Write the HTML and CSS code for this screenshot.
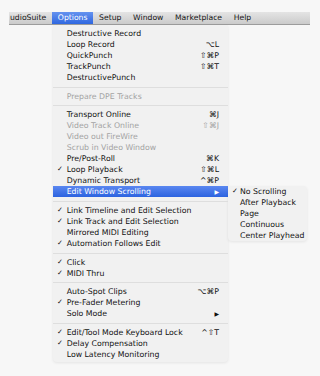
FILE: index.html
```html
<!DOCTYPE html>
<html>
<head>
<meta charset="utf-8">
<link rel="stylesheet" href="styles.css">
</head>
<body>
<div class="menubar">
  <span class="mb-item first">udioSuite</span>
  <span class="mb-item active">Options</span>
  <span class="mb-item">Setup</span>
  <span class="mb-item">Window</span>
  <span class="mb-item">Marketplace</span>
  <span class="mb-item">Help</span>
</div>
<div class="menu">
  <div class="row"><span class="chk"></span><span class="lbl">Destructive Record</span><span class="sc"></span></div>
  <div class="row"><span class="chk"></span><span class="lbl">Loop Record</span><span class="sc">⌥L</span></div>
  <div class="row"><span class="chk"></span><span class="lbl">QuickPunch</span><span class="sc">⇧⌘P</span></div>
  <div class="row"><span class="chk"></span><span class="lbl">TrackPunch</span><span class="sc">⇧⌘T</span></div>
  <div class="row"><span class="chk"></span><span class="lbl">DestructivePunch</span><span class="sc"></span></div>
  <div class="sep"></div>
  <div class="row off"><span class="chk"></span><span class="lbl">Prepare DPE Tracks</span><span class="sc"></span></div>
  <div class="sep"></div>
  <div class="row"><span class="chk"></span><span class="lbl">Transport Online</span><span class="sc">⌘J</span></div>
  <div class="row off"><span class="chk"></span><span class="lbl">Video Track Online</span><span class="sc">⇧⌘J</span></div>
  <div class="row off"><span class="chk"></span><span class="lbl">Video out FireWire</span><span class="sc"></span></div>
  <div class="row off"><span class="chk"></span><span class="lbl">Scrub in Video Window</span><span class="sc"></span></div>
  <div class="row"><span class="chk"></span><span class="lbl">Pre/Post-Roll</span><span class="sc">⌘K</span></div>
  <div class="row"><span class="chk">✓</span><span class="lbl">Loop Playback</span><span class="sc">⇧⌘L</span></div>
  <div class="row"><span class="chk"></span><span class="lbl">Dynamic Transport</span><span class="sc">^⌘P</span></div>
  <div class="row hl"><span class="chk"></span><span class="lbl">Edit Window Scrolling</span><span class="sc arrow">▶</span>
    <div class="submenu">
      <div class="row"><span class="chk">✓</span><span class="lbl">No Scrolling</span></div>
      <div class="row"><span class="chk"></span><span class="lbl">After Playback</span></div>
      <div class="row"><span class="chk"></span><span class="lbl">Page</span></div>
      <div class="row"><span class="chk"></span><span class="lbl">Continuous</span></div>
      <div class="row"><span class="chk"></span><span class="lbl">Center Playhead</span></div>
    </div>
  </div>
  <div class="sep"></div>
  <div class="row"><span class="chk">✓</span><span class="lbl">Link Timeline and Edit Selection</span><span class="sc"></span></div>
  <div class="row"><span class="chk">✓</span><span class="lbl">Link Track and Edit Selection</span><span class="sc"></span></div>
  <div class="row"><span class="chk"></span><span class="lbl">Mirrored MIDI Editing</span><span class="sc"></span></div>
  <div class="row"><span class="chk">✓</span><span class="lbl">Automation Follows Edit</span><span class="sc"></span></div>
  <div class="sep"></div>
  <div class="row"><span class="chk">✓</span><span class="lbl">Click</span><span class="sc"></span></div>
  <div class="row"><span class="chk">✓</span><span class="lbl">MIDI Thru</span><span class="sc"></span></div>
  <div class="sep"></div>
  <div class="row"><span class="chk"></span><span class="lbl">Auto-Spot Clips</span><span class="sc">⌥⌘P</span></div>
  <div class="row"><span class="chk">✓</span><span class="lbl">Pre-Fader Metering</span><span class="sc"></span></div>
  <div class="row"><span class="chk"></span><span class="lbl">Solo Mode</span><span class="sc arrow">▶</span></div>
  <div class="sep"></div>
  <div class="row"><span class="chk">✓</span><span class="lbl">Edit/Tool Mode Keyboard Lock</span><span class="sc">^⇧T</span></div>
  <div class="row"><span class="chk">✓</span><span class="lbl">Delay Compensation</span><span class="sc"></span></div>
  <div class="row"><span class="chk"></span><span class="lbl">Low Latency Monitoring</span><span class="sc"></span></div>
</div>
</body>
</html>
```

FILE: styles.css
```css
html, body {
  margin: 0;
  padding: 0;
}
body {
  background: #f7f7f7;
  font-family: "DejaVu Sans", "Liberation Sans", sans-serif;
  font-size: 7.8px;
  color: #111111;
  width: 320px;
  height: 376px;
  overflow: hidden;
}
.menubar {
  margin: 12px 0 0 9px;
  width: 301px;
  height: 12px;
  line-height: 12px;
  font-size: 7.7px;
  display: flex;
  background: linear-gradient(#e4e4e4, #cbcbcb);
  border-bottom: 1px solid #9c9c9c;
}
.mb-item {
  padding: 0 5.8px;
  color: #161616;
}
.mb-item.first {
  padding-left: 1px;
}
.mb-item.active {
  background: linear-gradient(#6592ef, #2f67e0);
  color: #ffffff;
}
.menu {
  margin-left: 53px;
  width: 175px;
  padding: 3px 0 2px;
  background: #f1f1f1;
  border-radius: 0 0 4px 4px;
  box-shadow: 0 1px 3px rgba(0, 0, 0, 0.08);
}
.row {
  position: relative;
  display: flex;
  height: 11px;
  line-height: 11px;
  padding: 0 9px 0 4px;
  white-space: nowrap;
}
.chk {
  width: 9.7px;
  flex: none;
  font-size: 7px;
}
.lbl {
  flex: 1;
}
.sc {
  flex: none;
  text-align: right;
}
.arrow {
  font-size: 6px;
}
.off {
  color: #a3a3a3;
}
.hl {
  background: linear-gradient(#5a87f0, #2c63e0);
  color: #ffffff;
}
.sep {
  height: 7.7px;
  position: relative;
}
.sep::after {
  content: "";
  position: absolute;
  left: 0;
  right: 0;
  top: 3.5px;
  height: 1px;
  background: #dedede;
}
.submenu {
  position: absolute;
  left: 175px;
  top: 0;
  width: 79px;
  background: #f1f1f1;
  border-radius: 0 4px 4px 4px;
  box-shadow: 0 1px 3px rgba(0, 0, 0, 0.08);
  color: #111111;
}
.submenu .row {
  padding-right: 4px;
}
.submenu .chk {
  width: 8px;
}
```
